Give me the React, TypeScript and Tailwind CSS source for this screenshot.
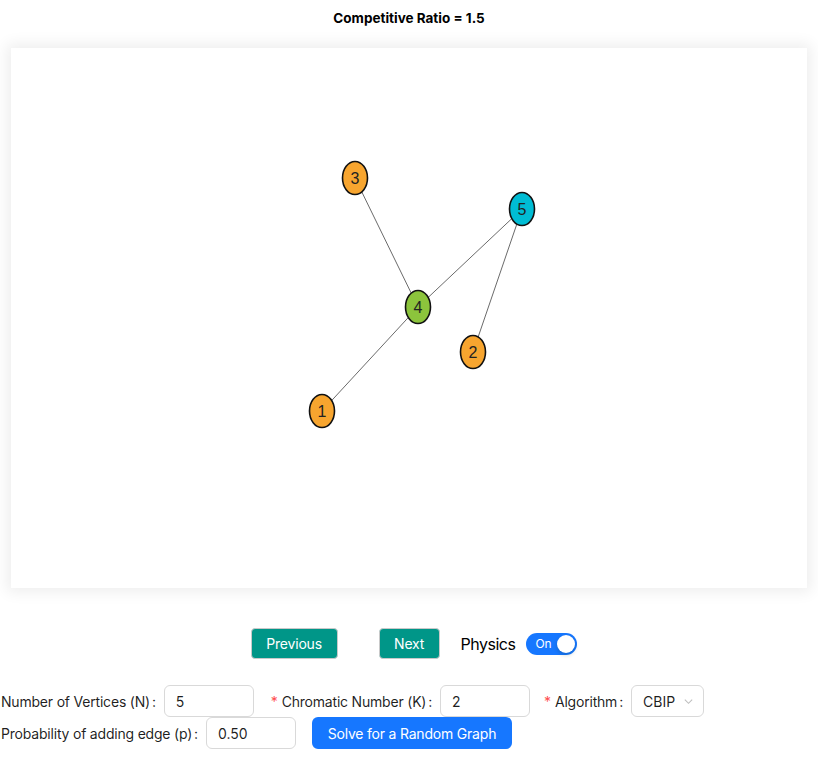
import React from "react";

const nodes = [
  { id: 1, x: 311, y: 363, fill: "#f7a52f" },
  { id: 2, x: 462, y: 304, fill: "#f7a52f" },
  { id: 3, x: 344, y: 130, fill: "#f7a52f" },
  { id: 4, x: 407, y: 259, fill: "#8cc43c" },
  { id: 5, x: 511, y: 161, fill: "#00bcd4" },
];

const edges: [number, number][] = [
  [3, 4],
  [4, 5],
  [5, 2],
  [4, 1],
];

function Graph() {
  const pos = (id: number) => nodes.find((n) => n.id === id)!;
  return (
    <svg width="796" height="540" className="block">
      {edges.map(([a, b]) => (
        <line
          key={`${a}-${b}`}
          x1={pos(a).x}
          y1={pos(a).y}
          x2={pos(b).x}
          y2={pos(b).y}
          stroke="#444"
          strokeWidth="0.8"
        />
      ))}
      {nodes.map((n) => (
        <g key={n.id}>
          <ellipse cx={n.x} cy={n.y} rx="12.5" ry="16.5" fill={n.fill} stroke="#111" strokeWidth="1.6" />
          <text
            x={n.x}
            y={n.y + 5.5}
            textAnchor="middle"
            fontSize="16"
            fontFamily="'Liberation Sans', Arial, sans-serif"
            fill="#222"
          >
            {n.id}
          </text>
        </g>
      ))}
    </svg>
  );
}

function Field({ label, value, required, width = "w-[90px]" }: { label: string; value: string; required?: boolean; width?: string }) {
  return (
    <div className="flex items-center">
      <span className="whitespace-nowrap text-[14px] tracking-[-0.2px] text-[rgba(0,0,0,0.88)]">
        {required && <span className="mr-[4px] text-[#ff4d4f]">*</span>}
        {label}
        <span className="ml-[2px] mr-[8px]">:</span>
      </span>
      <div className={`${width} h-[32px] rounded-[6px] border border-[#d9d9d9] bg-white px-[11px] flex items-center text-[14px] text-[rgba(0,0,0,0.88)]`}>
        {value}
      </div>
    </div>
  );
}

export default function App() {
  return (
    <div className="min-h-screen bg-white font-['Inter',sans-serif] text-[14px]">
      <div className="pt-[10px] text-center text-[13.5px] font-bold leading-[16px] text-black">
        Competitive Ratio = 1.5
      </div>
      <div className="px-[11px] pt-[22px]">
        <div className="h-[540px] w-[796px] bg-white shadow-[0_0_14px_4px_rgba(0,0,0,0.07)]">
          <Graph />
        </div>
      </div>

      <div className="mt-[40px] flex items-center justify-center pl-[10px]">
        <button className="h-[31px] w-[87px] rounded-[4px] border border-[#c9c9c9] bg-[#009688] text-[14px] tracking-[-0.2px] text-white">
          Previous
        </button>
        <button className="ml-[41px] h-[31px] w-[61px] rounded-[4px] border border-[#c9c9c9] bg-[#009688] text-[14px] tracking-[-0.2px] text-white">
          Next
        </button>
        <span className="ml-[21px] text-[16px] tracking-[-0.5px] text-black">Physics</span>
        <div className="ml-[11px] flex h-[22px] w-[51px] items-center rounded-full bg-[#1677ff] pl-[9px] pr-[2px]">
          <span className="text-[12px] text-white">On</span>
          <span className="ml-auto h-[18px] w-[18px] rounded-full bg-white shadow-[0_2px_4px_rgba(0,35,11,0.2)]" />
        </div>
      </div>

      <div className="mt-[26px] flex items-center pl-[1px]">
        <Field label="Number of Vertices (N)" value="5" />
        <div className="ml-[17px]">
          <Field label="Chromatic Number (K)" value="2" required />
        </div>
        <div className="ml-[14px] flex items-center">
          <span className="whitespace-nowrap text-[14px] tracking-[-0.2px] text-[rgba(0,0,0,0.88)]">
            <span className="mr-[4px] text-[#ff4d4f]">*</span>
            Algorithm
            <span className="ml-[2px] mr-[8px]">:</span>
          </span>
          <div className="flex h-[32px] w-[73px] items-center rounded-[6px] border border-[#d9d9d9] bg-white pl-[11px] pr-[9px] text-[14px] text-[rgba(0,0,0,0.88)]">
            CBIP
            <svg className="ml-auto" width="11" height="11" viewBox="0 0 12 12" fill="none" stroke="#bfbfbf" strokeWidth="1.2">
              <path d="M2 4l4 4 4-4" />
            </svg>
          </div>
        </div>
      </div>
      <div className="mt-0 flex items-center pl-[1px]">
        <Field label="Probability of adding edge (p)" value="0.50" />
        <button className="ml-[16px] h-[32px] w-[200px] rounded-[6px] bg-[#1677ff] text-[14px] tracking-[-0.2px] text-white">
          Solve for a Random Graph
        </button>
      </div>
    </div>
  );
}
